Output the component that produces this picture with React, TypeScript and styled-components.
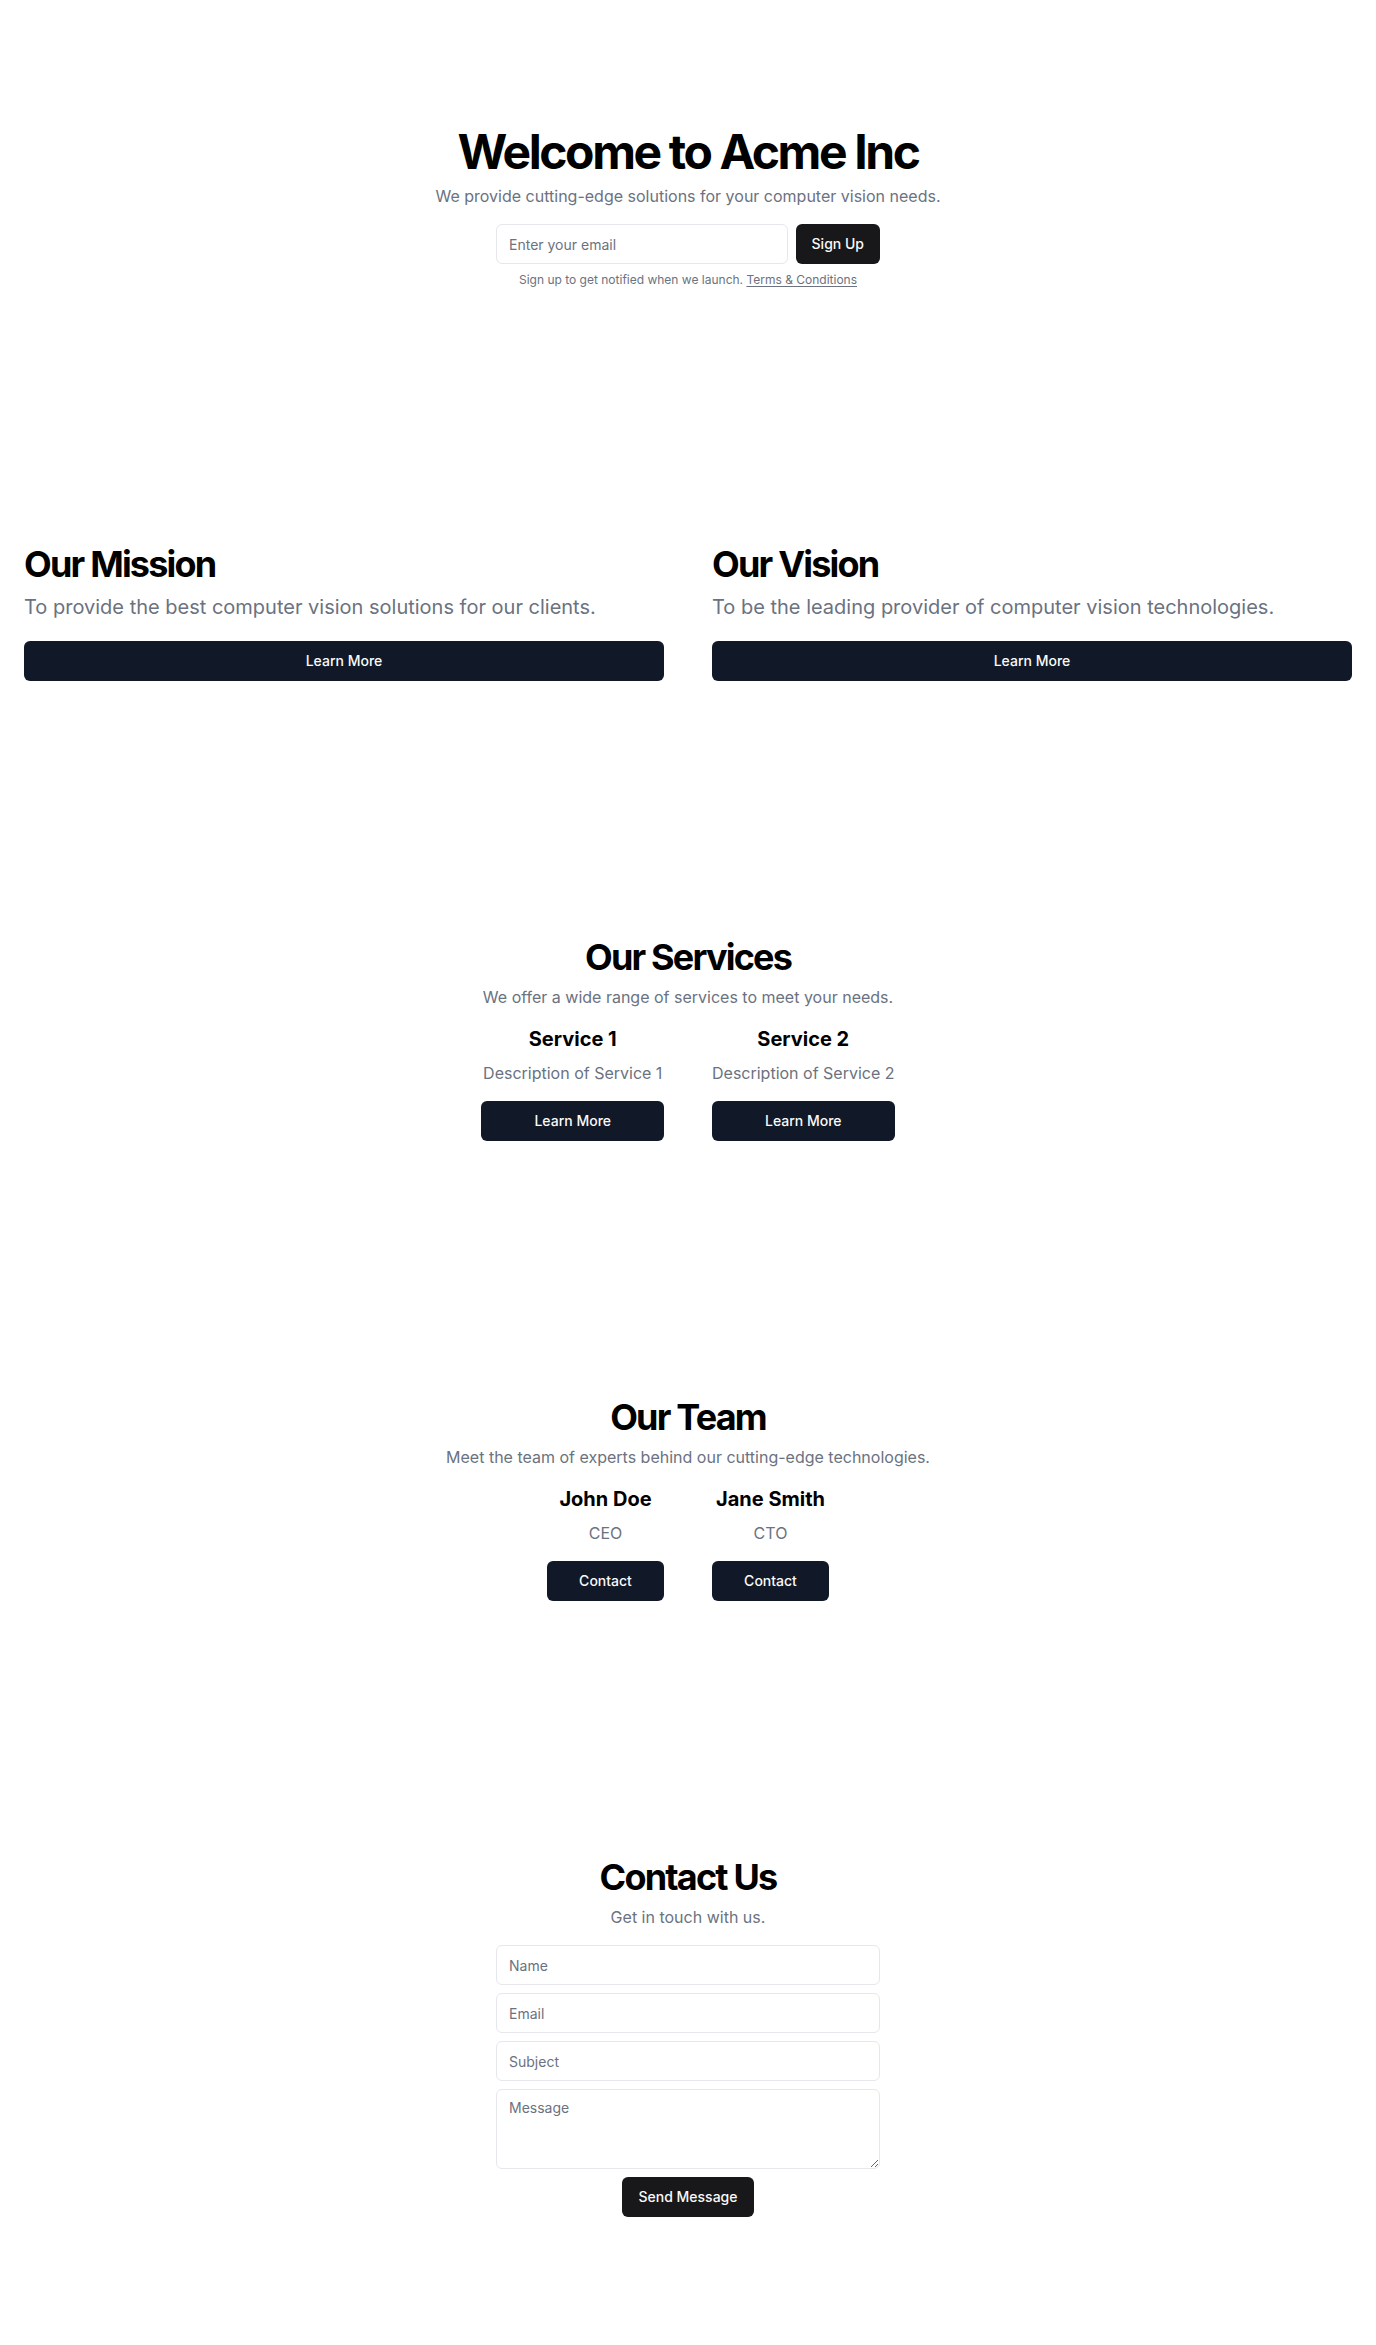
import React from "react";
import styled, { createGlobalStyle } from "styled-components";

const GlobalStyle = createGlobalStyle`
  *, *::before, *::after { box-sizing: border-box; }
  html, body { margin: 0; padding: 0; background: #ffffff; }
  body {
    font-family: Inter, "Noto Sans", "Liberation Sans", sans-serif;
    color: #000000;
    -webkit-font-smoothing: antialiased;
  }
  h1, h2, h3, p { margin: 0; }
  input, textarea, button { font-family: inherit; }
`;

const Page = styled.main`
  display: flex;
  flex-direction: column;
  width: 100%;
`;

const Section = styled.section`
  padding: 128px 24px;
  display: flex;
  flex-direction: column;
  align-items: center;
  text-align: center;
`;

const HeroStack = styled.div`
  display: flex;
  flex-direction: column;
  align-items: center;
  gap: 16px;
`;

const TitleGroup = styled.div`
  display: flex;
  flex-direction: column;
  align-items: center;
  gap: 8px;
`;

const HeroTitle = styled.h1`
  font-size: 48px;
  line-height: 1;
  font-weight: 700;
  letter-spacing: -0.05em;
  color: #000;
`;

const SectionTitle = styled.h2`
  font-size: 36px;
  line-height: 40px;
  font-weight: 700;
  letter-spacing: -0.05em;
  color: #000;
`;

const Lead = styled.p<{ $large?: boolean }>`
  color: #6b7280;
  font-size: ${(p) => (p.$large ? "20px" : "16px")};
  line-height: ${(p) => (p.$large ? "28px" : "24px")};
`;

const FormBox = styled.div`
  width: 100%;
  max-width: 384px;
  display: flex;
  flex-direction: column;
  gap: 8px;
`;

const InlineForm = styled.form`
  display: flex;
  gap: 8px;
`;

const TextInput = styled.input<{ $grow?: boolean }>`
  flex: ${(p) => (p.$grow ? "1 1 0%" : "none")};
  min-width: 0;
  width: 100%;
  height: 40px;
  padding: 8px 12px;
  border: 1px solid #e5e7eb;
  border-radius: 6px;
  background: #fff;
  font-size: 14px;
  color: #111827;
  outline: none;
  &::placeholder { color: #6b7280; }
`;

const TextArea = styled.textarea`
  flex: none;
  width: 100%;
  min-height: 80px;
  height: 80px;
  padding: 8px 12px;
  border: 1px solid #e5e7eb;
  border-radius: 6px;
  background: #fff;
  font-size: 14px;
  line-height: 20px;
  color: #111827;
  outline: none;
  display: block;
  &::placeholder { color: #6b7280; }
`;

const Button = styled.button<{ $tone?: "zinc" | "navy"; $full?: boolean }>`
  flex: none;
  height: 40px;
  padding: 0 16px;
  border: none;
  border-radius: 6px;
  background: ${(p) => (p.$tone === "navy" ? "#111827" : "#18181b")};
  color: #fafafa;
  font-size: 14px;
  font-weight: 500;
  line-height: 20px;
  cursor: pointer;
  white-space: nowrap;
  width: ${(p) => (p.$full ? "100%" : "auto")};
`;

const Fine = styled.p`
  font-size: 12px;
  line-height: 16px;
  color: #6b7280;
`;

const FineLink = styled.a`
  color: #6b7280;
  text-decoration: underline;
  text-underline-offset: 2px;
`;

const SplitSection = styled.section`
  padding: 128px 24px;
  display: grid;
  grid-template-columns: repeat(2, minmax(0, 1fr));
  gap: 48px;
`;

const SplitColumn = styled.div`
  display: flex;
  flex-direction: column;
  gap: 20px;
  text-align: left;
`;

const SplitHead = styled.div`
  display: flex;
  flex-direction: column;
  gap: 9px;
`;

const CenterStack = styled.div`
  display: flex;
  flex-direction: column;
  align-items: center;
  gap: 16px;
`;

const CardGrid = styled.div<{ $minCol?: number }>`
  display: grid;
  grid-template-columns: repeat(2, minmax(${(p) => p.$minCol ?? 0}px, 1fr));
  gap: 48px;
`;

const Card = styled.div`
  display: flex;
  flex-direction: column;
  align-items: stretch;
  gap: 8px;
`;

const CardTitle = styled.h3`
  font-size: 20px;
  line-height: 28px;
  font-weight: 700;
  color: #000;
`;

const CardAction = styled.div`
  margin-top: 8px;
  display: flex;
`;

const ContactForm = styled.form`
  width: 384px;
  display: flex;
  flex-direction: column;
  align-items: center;
  gap: 8px;
`;

const services = [
  { title: "Service 1", desc: "Description of Service 1" },
  { title: "Service 2", desc: "Description of Service 2" },
];

const team = [
  { name: "John Doe", role: "CEO" },
  { name: "Jane Smith", role: "CTO" },
];

export default function App() {
  return (
    <>
      <GlobalStyle />
      <Page>
        <Section>
          <HeroStack>
            <TitleGroup>
              <HeroTitle>Welcome to Acme Inc</HeroTitle>
              <Lead>We provide cutting-edge solutions for your computer vision needs.</Lead>
            </TitleGroup>
            <FormBox>
              <InlineForm onSubmit={(e) => e.preventDefault()}>
                <TextInput $grow type="email" placeholder="Enter your email" />
                <Button type="submit">Sign Up</Button>
              </InlineForm>
              <Fine>
                Sign up to get notified when we launch.{" "}
                <FineLink href="#">Terms &amp; Conditions</FineLink>
              </Fine>
            </FormBox>
          </HeroStack>
        </Section>

        <SplitSection>
          <SplitColumn>
            <SplitHead>
              <SectionTitle>Our Mission</SectionTitle>
              <Lead $large>To provide the best computer vision solutions for our clients.</Lead>
            </SplitHead>
            <Button $tone="navy" $full>Learn More</Button>
          </SplitColumn>
          <SplitColumn>
            <SplitHead>
              <SectionTitle>Our Vision</SectionTitle>
              <Lead $large>To be the leading provider of computer vision technologies.</Lead>
            </SplitHead>
            <Button $tone="navy" $full>Learn More</Button>
          </SplitColumn>
        </SplitSection>

        <Section>
          <CenterStack>
            <TitleGroup>
              <SectionTitle>Our Services</SectionTitle>
              <Lead>We offer a wide range of services to meet your needs.</Lead>
            </TitleGroup>
            <CardGrid>
              {services.map((s) => (
                <Card key={s.title}>
                  <CardTitle>{s.title}</CardTitle>
                  <Lead>{s.desc}</Lead>
                  <CardAction>
                    <Button $tone="navy" $full>Learn More</Button>
                  </CardAction>
                </Card>
              ))}
            </CardGrid>
          </CenterStack>
        </Section>

        <Section>
          <CenterStack>
            <TitleGroup>
              <SectionTitle>Our Team</SectionTitle>
              <Lead>Meet the team of experts behind our cutting-edge technologies.</Lead>
            </TitleGroup>
            <CardGrid $minCol={117}>
              {team.map((m) => (
                <Card key={m.name}>
                  <CardTitle>{m.name}</CardTitle>
                  <Lead>{m.role}</Lead>
                  <CardAction>
                    <Button $tone="navy" $full>Contact</Button>
                  </CardAction>
                </Card>
              ))}
            </CardGrid>
          </CenterStack>
        </Section>

        <Section>
          <CenterStack>
            <TitleGroup>
              <SectionTitle>Contact Us</SectionTitle>
              <Lead>Get in touch with us.</Lead>
            </TitleGroup>
            <ContactForm onSubmit={(e) => e.preventDefault()}>
              <TextInput placeholder="Name" />
              <TextInput type="email" placeholder="Email" />
              <TextInput placeholder="Subject" />
              <TextArea placeholder="Message" />
              <Button type="submit">Send Message</Button>
            </ContactForm>
          </CenterStack>
        </Section>
      </Page>
    </>
  );
}
